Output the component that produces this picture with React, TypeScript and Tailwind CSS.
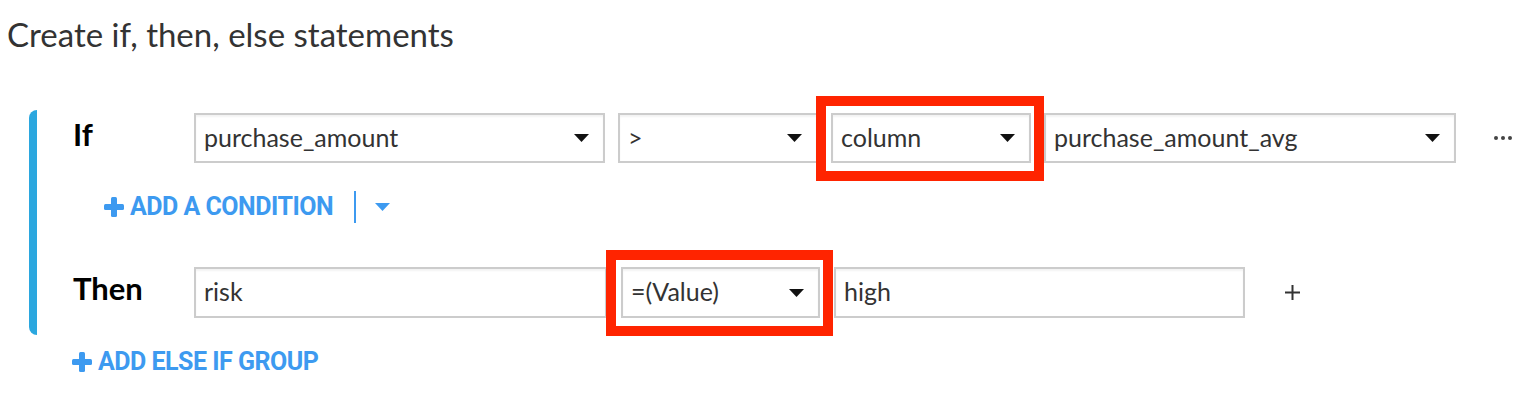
import React from 'react';

function Caret({ className = 'fill-[#111]' }: { className?: string }) {
  return (
    <svg width="15" height="8" viewBox="0 0 15 8" className={className}>
      <path d="M0 0h15L7.5 8z" />
    </svg>
  );
}

function BoldPlus() {
  return (
    <svg width="20" height="20" viewBox="0 0 20 20" className="fill-[#3d9af0] shrink-0">
      <rect x="7" y="0" width="6" height="20" rx="1.5" />
      <rect x="0" y="7" width="20" height="6" rx="1.5" />
    </svg>
  );
}

function Select({ value, className, caret = true }: { value: string; className: string; caret?: boolean }) {
  return (
    <div
      className={`relative flex items-center justify-between border-2 border-[#cccccc] bg-white pl-[8px] pr-[14px] text-[25px] text-[#333] shadow-[inset_0_2px_2px_rgba(0,0,0,0.05)] ${className}`}
    >
      <span className="-mt-[1px]">{value}</span>
      {caret && <Caret />}
    </div>
  );
}

// red annotation frame drawn over a control
function Highlight() {
  return <div className="pointer-events-none absolute -left-[15px] -right-[13px] -top-[17px] -bottom-[18px] border-[10px] border-[#ff2400]" />;
}

export default function App() {
  return (
    <div className="w-[1540px] h-[398px] bg-white font-['Lato',sans-serif] flex flex-col">
      <h1 className="pl-[7px] pt-[15px] text-[33px] leading-[38px] text-[#333]">Create if, then, else statements</h1>

      {/* If / Then group */}
      <div className="mt-[57px] ml-[29px] w-[1500px] border-l-8 border-[#2ba7df] rounded-l-lg pl-[36px] pt-[3px] pb-[17px]">
        <div className="flex items-center h-[50px]">
          <div className="w-[121px] text-[31px] font-bold text-black mb-[7px]">If</div>
          <div className="flex gap-[13px]">
            <Select value="purchase_amount" className="w-[411px] h-[50px]" />
            <Select value=">" className="w-[200px] h-[50px]" />
            <div className="relative">
              <Select value="column" className="w-[200px] h-[50px]" />
              <Highlight />
            </div>
            <Select value="purchase_amount_avg" className="w-[412px] h-[50px]" />
          </div>
          <div className="ml-[38px] flex gap-[3px]">
            <span className="w-[4px] h-[4px] rounded-full bg-[#444]" />
            <span className="w-[4px] h-[4px] rounded-full bg-[#444]" />
            <span className="w-[4px] h-[4px] rounded-full bg-[#444]" />
          </div>
        </div>

        <div className="mt-[28px] ml-[31px] h-[32px] flex items-center font-['Roboto',sans-serif] font-bold text-[25px] tracking-[-0.5px] text-[#3d9af0]">
          <BoldPlus />
          <span className="ml-[6px]">ADD A CONDITION</span>
          <span className="ml-[21px] w-[2px] h-[32px] bg-[#3d9af0]" />
          <span className="ml-[19px]">
            <Caret className="fill-[#3d9af0]" />
          </span>
        </div>

        <div className="mt-[44px] flex items-center h-[51px]">
          <div className="w-[121px] text-[31px] font-bold text-black mb-[8px]">Then</div>
          <div className="flex gap-[14px]">
            <Select value="risk" caret={false} className="w-[413px] h-[51px]" />
            <div className="relative">
              <Select value="=(Value)" className="w-[199px] h-[51px]" />
              <Highlight />
            </div>
            <Select value="high" caret={false} className="w-[411px] h-[51px]" />
          </div>
          <svg width="15" height="15" viewBox="0 0 15 15" className="ml-[40px] stroke-[#333]">
            <path d="M7.5 0v15M0 7.5h15" strokeWidth="2" />
          </svg>
        </div>
      </div>

      <div className="mt-[11px] ml-[72px] h-[32px] flex items-center font-['Roboto',sans-serif] font-bold text-[25px] tracking-[-0.5px] text-[#3d9af0]">
        <BoldPlus />
        <span className="ml-[6px]">ADD ELSE IF GROUP</span>
      </div>
    </div>
  );
}
